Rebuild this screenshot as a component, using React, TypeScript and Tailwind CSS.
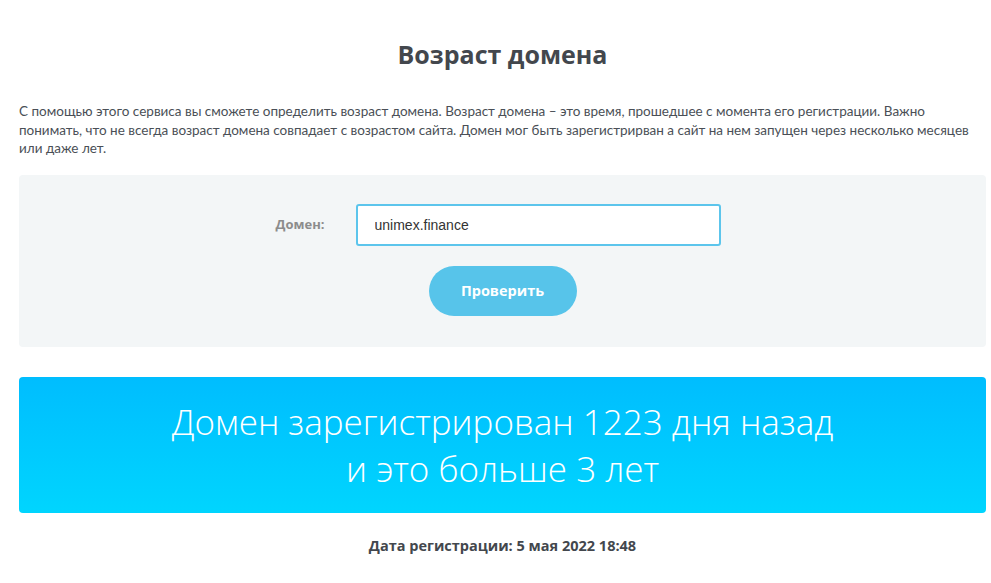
export default function App() {
  return (
    <div className="min-h-screen bg-white pl-[19px] pr-[5px] pt-[37px] text-[#4a4f56]" style={{ fontFamily: '"Open Sans", "Noto Sans", sans-serif' }}>
      <h1 className="text-center text-[25px] font-bold leading-[34px] text-[#43474d]">Возраст домена</h1>

      <p
        className="mt-[31px] text-[13.5px] leading-[18.5px] text-[#4a4f56]"
        style={{ fontFamily: 'Lato, "Open Sans", sans-serif' }}
      >
        С помощью этого сервиса вы сможете определить возраст домена. Возраст домена – это время, прошедшее с момента его
        регистрации. Важно понимать, что не всегда возраст домена совпадает с возрастом сайта. Домен мог быть зарегистрирван а
        сайт на нем запущен через несколько месяцев или даже лет.
      </p>

      <div className="mt-[17px] flex h-[172px] flex-col items-center rounded-[4px] bg-[#f3f6f7] pt-[29px]">
        <div className="mr-[80px] flex items-center">
          <label className="mr-[31px] w-[120px] text-right text-[13px] font-bold text-[#8c8c8c]">Домен:</label>
          <input
            className="h-[42px] w-[365px] rounded-[3px] border-2 border-[#5cc5ec] bg-white px-[17px] text-[14px] text-[#333] outline-none"
            style={{ fontFamily: '"Liberation Sans", Arial, sans-serif' }}
            defaultValue="unimex.finance"
          />
        </div>
        <button className="mt-[20px] h-[50px] w-[148px] rounded-full bg-[#57c4ea] text-[14.5px] font-bold text-white">
          Проверить
        </button>
      </div>

      <div className="mt-[30px] flex h-[136px] flex-col items-center justify-center rounded-[4px] bg-gradient-to-b from-[#00bdfe] to-[#00d5fe] text-center text-[35px] font-light leading-[47px] text-white">
        <div>Домен зарегистрирован 1223 дня назад</div>
        <div>и это больше 3 лет</div>
      </div>

      <div className="mt-[22px] text-center text-[14.5px] font-bold text-[#43474d]">Дата регистрации: 5 мая 2022 18:48</div>
    </div>
  );
}
